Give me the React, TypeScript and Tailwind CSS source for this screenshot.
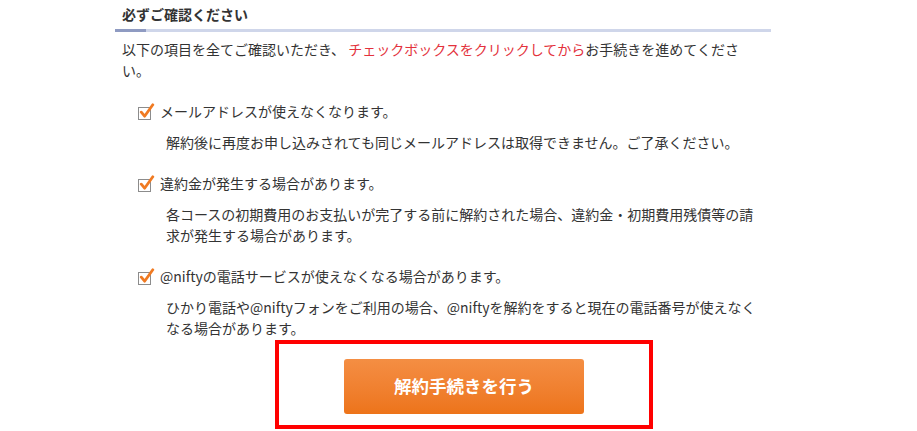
import React from "react";

const font = {
  fontFamily: '"Noto Sans CJK JP", "Noto Sans", sans-serif',
};

function Check() {
  return (
    <svg width="18" height="18" viewBox="0 0 18 18" className="shrink-0">
      <rect x="1.5" y="4.5" width="12" height="12" fill="#fff" stroke="#8c8c8c" strokeWidth="1" />
      <path
        d="M4.3 9.2 L7.6 13.2 L15.8 1.8"
        fill="none"
        stroke="#f07a22"
        strokeWidth="2.8"
        strokeLinecap="round"
        strokeLinejoin="round"
      />
    </svg>
  );
}

function Item({ label, children, first }: { label: string; children: React.ReactNode; first?: boolean }) {
  return (
    <div className={first ? "" : "mt-[20px]"}>
      <div className="flex items-center gap-[5px] pl-[15px] leading-[21px]">
        <Check />
        <span>{label}</span>
      </div>
      <div className="mt-[10px] pl-[44px] leading-[21px]">{children}</div>
    </div>
  );
}

export default function App() {
  return (
    <div className="w-[917px] h-[431px] bg-white overflow-hidden text-[14px] text-[#333333]" style={font}>
      <div className="ml-[115px] w-[656px]">
        <div className="pt-[4px] pl-[7px] font-bold leading-[21px]">必ずご確認ください</div>
        <div className="mt-[4px] flex h-[3px] bg-[#cfd6ea]">
          <div className="w-[31px] h-[3px] bg-[#8f9bc2]" />
        </div>
        <div className="mt-[7px] pl-[7px] leading-[21px]">
          以下の項目を全てご確認いただき、 <span className="text-[#e3323c]">チェックボックスをクリックしてから</span>お手続きを進めてくださ
          <br />
          い。
        </div>
        <div className="mt-[20px] pl-[7px]">
          <Item first label="メールアドレスが使えなくなります。">
            解約後に再度お申し込みされても同じメールアドレスは取得できません。ご了承ください。
          </Item>
          <Item label="違約金が発生する場合があります。">
            各コースの初期費用のお支払いが完了する前に解約された場合、違約金・初期費用残債等の請
            <br />
            求が発生する場合があります。
          </Item>
          <Item label="@niftyの電話サービスが使えなくなる場合があります。">
            ひかり電話や@niftyフォンをご利用の場合、@niftyを解約をすると現在の電話番号が使えなく
            <br />
            なる場合があります。
          </Item>
        </div>
        <div className="mt-[1px] ml-[160px] w-[378px] h-[89px] border-4 border-[#ff0000] pl-[65px] pt-[15px]">
          <button
            className="w-[240px] h-[55px] rounded-[3px] bg-gradient-to-b from-[#f48e43] to-[#ed7419] text-white font-bold text-[17.5px] flex items-center justify-center"
            style={font}
          >
            解約手続きを行う
          </button>
        </div>
      </div>
    </div>
  );
}
